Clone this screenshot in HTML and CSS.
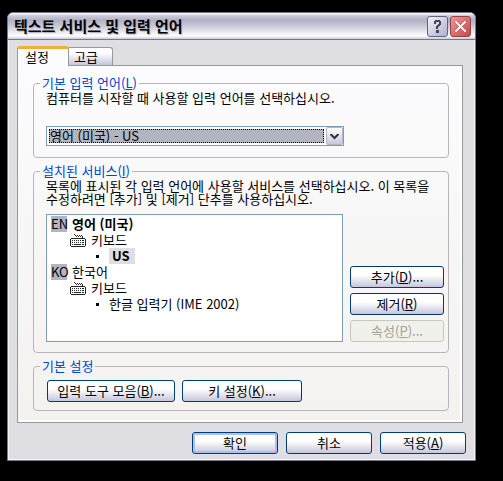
FILE: index.html
```
<!DOCTYPE html>
<html lang="ko">
<head>
    <meta charset="UTF-8">
    <meta name="viewport" content="width=device-width, initial-scale=1.0">
    <title>텍스트 서비스 및 입력 언어</title>
    <link rel="stylesheet" href="styles.css">
</head>
<body>
    <div class="dialog">
        <header class="titlebar">
            <h1>텍스트 서비스 및 입력 언어</h1>
            <button type="button" class="caption-btn help" aria-label="도움말">
                <svg width="19" height="19" viewBox="0 0 19 19">
                    <path d="M6 4h1V3h5v1h1v4h-1v1h-1v1h-1v2H8V9h1V8h1V7h1V5H8v2H6zM8 13h3v3H8z" fill="#44465c"/>
                </svg>
            </button>
            <button type="button" class="caption-btn close" aria-label="닫기">
                <svg width="19" height="19" viewBox="0 0 19 19">
                    <path d="M5 5l9 9M14 5l-9 9" stroke="#b04446" stroke-width="3" stroke-linecap="square"/>
                    <path d="M5 5l9 9M14 5l-9 9" stroke="#fff" stroke-width="2" stroke-linecap="square"/>
                </svg>
            </button>
        </header>

        <div class="content">
            <div class="tabs" role="tablist">
                <button type="button" class="tab active" role="tab" aria-selected="true">설정</button>
                <button type="button" class="tab" role="tab" aria-selected="false">고급</button>
            </div>

            <div class="panel" role="tabpanel">
                <fieldset class="group default-lang">
                    <legend>기본 입력 언어(<u>L</u>)</legend>
                    <label class="desc" for="lang">컴퓨터를 시작할 때 사용할 입력 언어를 선택하십시오.</label>
                    <div class="combo">
                        <select id="lang">
                            <option>영어 (미국) - US</option>
                            <option>한국어 - 한글 입력기 (IME 2002)</option>
                        </select>
                        <span class="arrow">
                            <svg width="9" height="7" viewBox="0 0 9 7">
                                <path d="M0 1h2l2.500 2.500L7 1h2v1L4.500 6.500 0 2z" fill="#33343c"/>
                            </svg>
                        </span>
                    </div>
                </fieldset>

                <fieldset class="group services">
                    <legend>설치된 서비스(<u>I</u>)</legend>
                    <p class="desc">목록에 표시된 각 입력 언어에 사용할 서비스를 선택하십시오. 이 목록을<br>수정하려면 [추가] 및 [제거] 단추를 사용하십시오.</p>
                    <div class="row">
                        <ul class="tree">
                            <li><span class="code">EN</span><b>영어 (미국)</b></li>
                            <li class="device">
                                <svg width="16" height="14" viewBox="0 0 16 14" shape-rendering="crispEdges">
                                    <path d="M4 1h1v1H4zM5 2h1v1H5zM6 3h1v1H6zM7 2h1v1H7zM8 3h1v1H8zM9 2h1v1H9zM10 3h1v1h-1zM11 2h1v1h-1zM12 3h1v2h-1z" fill="#222"/>
                                    <path d="M1 5h14v1h1v7h-1v1H1v-1H0V6h1z" fill="#222"/>
                                    <path d="M1 6h14v7H1z" fill="#fff"/>
                                    <path d="M2 7h1v1H2zM4 7h1v1H4zM6 7h1v1H6zM8 7h1v1H8zM10 7h1v1h-1zM12 7h2v1h-2zM2 9h1v1H2zM4 9h1v1H4zM6 9h1v1H6zM8 9h1v1H8zM10 9h1v1h-1zM12 9h2v1h-2zM2 11h1v1H2zM4 11h7v1H4zM12 11h2v1h-2z" fill="#222"/>
                                </svg>
                                키보드
                            </li>
                            <li class="item"><b class="selected">US</b></li>
                            <li><span class="code">KO</span>한국어</li>
                            <li class="device">
                                <svg width="16" height="14" viewBox="0 0 16 14" shape-rendering="crispEdges">
                                    <path d="M4 1h1v1H4zM5 2h1v1H5zM6 3h1v1H6zM7 2h1v1H7zM8 3h1v1H8zM9 2h1v1H9zM10 3h1v1h-1zM11 2h1v1h-1zM12 3h1v2h-1z" fill="#222"/>
                                    <path d="M1 5h14v1h1v7h-1v1H1v-1H0V6h1z" fill="#222"/>
                                    <path d="M1 6h14v7H1z" fill="#fff"/>
                                    <path d="M2 7h1v1H2zM4 7h1v1H4zM6 7h1v1H6zM8 7h1v1H8zM10 7h1v1h-1zM12 7h2v1h-2zM2 9h1v1H2zM4 9h1v1H4zM6 9h1v1H6zM8 9h1v1H8zM10 9h1v1h-1zM12 9h2v1h-2zM2 11h1v1H2zM4 11h7v1H4zM12 11h2v1h-2z" fill="#222"/>
                                </svg>
                                키보드
                            </li>
                            <li class="item"><span>한글 입력기 (IME 2002)</span></li>
                        </ul>
                        <div class="side">
                            <button type="button" class="btn">추가(<u>D</u>)...</button>
                            <button type="button" class="btn">제거(<u>R</u>)</button>
                            <button type="button" class="btn" disabled>속성(<u>P</u>)...</button>
                        </div>
                    </div>
                </fieldset>

                <fieldset class="group prefs">
                    <legend>기본 설정</legend>
                    <div class="row">
                        <button type="button" class="btn toolbar-btn">입력 도구 모음(<u>B</u>)...</button>
                        <button type="button" class="btn key-btn">키 설정(<u>K</u>)...</button>
                    </div>
                </fieldset>
            </div>

            <footer class="actions">
                <button type="button" class="btn default">확인</button>
                <button type="button" class="btn">취소</button>
                <button type="button" class="btn">적용(<u>A</u>)</button>
            </footer>
        </div>
    </div>
</body>
</html>
```
FILE: styles.css
```
* {
    box-sizing: border-box;
}
body {
    margin: 0;
    padding: 12px 27px 20px 7px;
    background: #000;
    color: #000;
    font-family: "Noto Sans CJK KR", sans-serif;
    font-size: 13px;
    line-height: 16px;
}
button, select {
    font: inherit;
    color: inherit;
}
h1, p, ul {
    margin: 0;
    padding: 0;
}
.dialog {
    border: 1px solid #77778c;
    border-radius: 6px 6px 0 0;
    background: #dfdee3;
    overflow: hidden;
}

/* title bar */
.titlebar {
    display: flex;
    align-items: center;
    gap: 2px;
    height: 27px;
    padding: 0 4px 0 6px;
    border-bottom: 1px solid #77778c;
    background: linear-gradient(#fff 0, #c9c9d8 3px, #b0b0c6 7px, #c4c4d4 12px, #fff 23px, #c8c8d6 26px);
}
.titlebar h1 {
    flex: 1;
    font-size: 15px;
    line-height: 18px;
    font-weight: bold;
    text-shadow: 1px 1px 1px #a8a8bc;
}
.caption-btn {
    width: 21px;
    height: 21px;
    padding: 0;
    border: 1px solid #5c6488;
    border-radius: 3px;
    background: linear-gradient(135deg, #f2f2f8, #b0b0cc);
}
.caption-btn svg {
    display: block;
}
.caption-btn.close {
    border-color: #93424a;
    background: linear-gradient(135deg, #ec9a96, #c94848);
}

.content {
    padding: 6px 8px 5px;
    border: 1px solid #f4f4f8;
    border-top: 0;
}

/* tabs */
.tabs {
    display: flex;
    align-items: flex-end;
}
.tab {
    width: 44px;
    height: 18px;
    padding: 0 9px 0 0;
    border: 1px solid #919b9c;
    border-bottom: 0;
    border-left: 0;
    border-radius: 0 3px 0 0;
    background: linear-gradient(#fff 30%, #c6c6da);
    line-height: 16px;
}
.tab.active {
    position: relative;
    width: 52px;
    height: 20px;
    margin-bottom: -1px;
    padding: 0 12px 3px 0;
    border-left: 1px solid #919b9c;
    border-top: 3px solid #f0ae3c;
    border-radius: 3px 3px 0 0;
    background: #fcfcfe;
}
.panel {
    padding: 9px 13px 11px 15px;
    margin-right: 3px;
    border: 1px solid #919b9c;
    background: linear-gradient(#fcfcfe, #f3f2ef);
    box-shadow: inset -2px -2px 0 #fff;
}

/* groups */
.group {
    min-width: 0;
    margin: 0 0 5px;
    padding: 0 4px 10px 12px;
    border: 1px solid #b8b4bc;
    border-radius: 4px;
}
.default-lang {
    padding-bottom: 11px;
}
.group legend {
    margin-left: -6px;
    padding: 0 2px;
    color: #0046c8;
}
.desc {
    display: block;
    line-height: 13px;
    white-space: nowrap;
}
.row {
    display: flex;
    gap: 7px;
}

.combo {
    position: relative;
    width: 298px;
    height: 20px;
    margin-top: 22px;
    padding: 2px 19px 2px 2px;
    border: 1px solid #7f9db9;
    background: #fff;
}
.combo select {
    display: block;
    width: 100%;
    height: 14px;
    padding: 0;
    border: 1px dotted #000;
    border-radius: 0;
    background: #b2b4bf;
    line-height: 12px;
    appearance: none;
    outline: 0;
}
.arrow {
    position: absolute;
    top: 0;
    right: 0;
    width: 17px;
    height: 18px;
    display: flex;
    align-items: center;
    justify-content: center;
    border: 1px solid #b4b4c8;
    border-radius: 2px;
    background: linear-gradient(#fff, #c8c8dc);
    pointer-events: none;
}

.services .desc {
    padding-bottom: 9px;
}
.tree {
    flex: 1;
    height: 128px;
    padding: 1px 4px;
    border: 1px solid #7f9db9;
    background: #fff;
    list-style: none;
}
.tree li {
    display: flex;
    align-items: center;
    height: 16px;
}
.code {
    width: 16px;
    margin-right: 5px;
    background: #b2b4bf;
}
.device {
    gap: 5px;
    padding-left: 19px;
}
.item {
    padding-left: 45px;
}
.item::before {
    content: "";
    width: 3px;
    height: 3px;
    margin-right: 10px;
    background: #000;
}
.selected {
    padding: 0 5px 0 3px;
    background: #dfdee3;
}
.side {
    display: flex;
    flex-direction: column;
    justify-content: flex-end;
    gap: 5px;
    width: 94px;
}

/* buttons */
.btn {
    height: 22px;
    padding: 0;
    border: 1px solid #003c74;
    border-radius: 3px;
    background: linear-gradient(#fff 40%, #c6c6dc);
    line-height: 18px;
}
.btn:disabled {
    border-color: #c9c7ba;
    background: #f1f1ec;
    color: #a1a192;
}
.btn.default {
    box-shadow: inset 0 0 0 2px #a9c2ee;
}
.prefs {
    margin: 0;
    padding-bottom: 8px;
}
.prefs .row {
    padding: 6px 1px 0;
}
.toolbar-btn {
    width: 128px;
}
.key-btn {
    width: 120px;
}
.actions {
    display: flex;
    justify-content: flex-end;
    gap: 8px;
    padding-top: 9px;
}
.actions .btn {
    width: 86px;
}
```
